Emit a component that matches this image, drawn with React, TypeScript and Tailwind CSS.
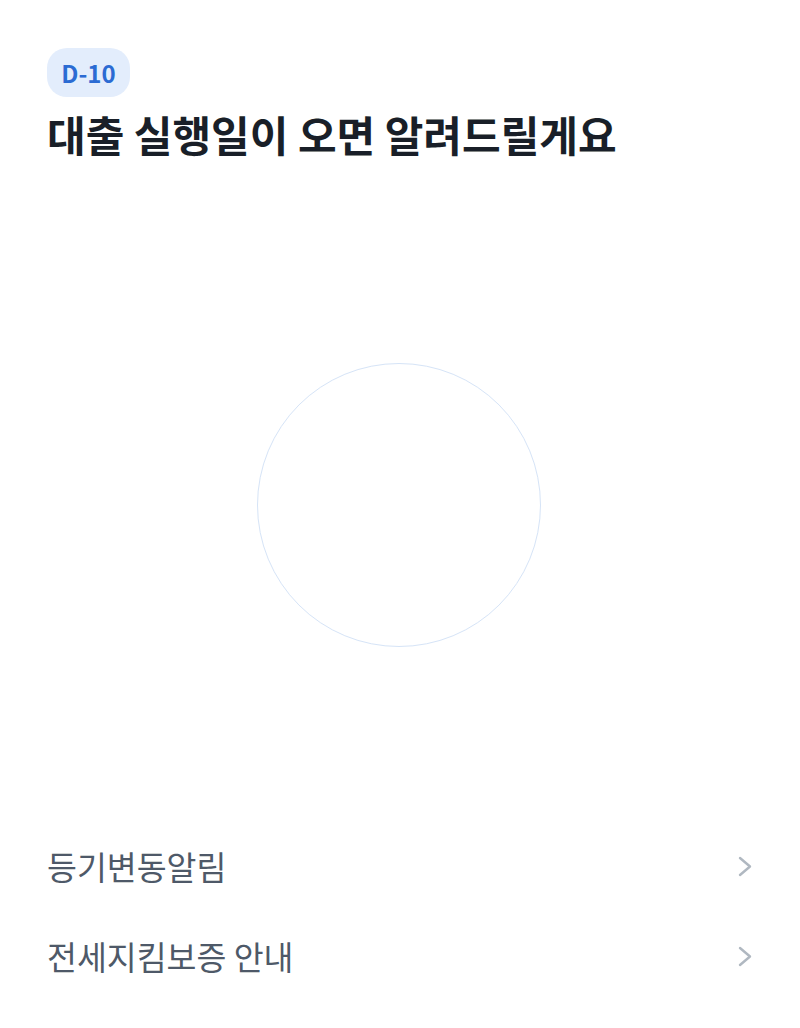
export default function App() {
  const items = ["등기변동알림", "전세지킴보증 안내"];
  return (
    <div
      className="w-full min-h-[1028px] bg-white flex flex-col"
      style={{ fontFamily: '"Noto Sans CJK KR", "Noto Sans", sans-serif' }}
    >
      <div className="px-[47px]">
        <div className="mt-[48px] h-[49px] w-[83px] rounded-[20px] bg-[#e3edfc] flex items-center justify-center text-[24px] font-semibold text-[#2b6bd3] leading-none">
          D-10
        </div>
        <h1 className="mt-[10px] text-[42px] font-bold leading-[54px] text-[#191f28] whitespace-nowrap">
          대출 실행일이 오면 알려드릴게요
        </h1>
      </div>
      <div className="mt-[202px] flex justify-center">
        <div className="w-[284px] h-[284px] rounded-full border-[1.5px] border-[#d6e4f7] ml-[-2px]" />
      </div>
      <div className="mt-[174px] flex flex-col">
        {items.map((t) => (
          <div key={t} className="h-[90px] flex items-center justify-between pl-[47px] pr-[48px]">
            <span className="text-[32.5px] leading-[42px] text-[#4e5968]">{t}</span>
            <svg width="14" height="21" viewBox="0 0 14 21" fill="none">
              <path d="M2 2 L12 10.5 L2 19" stroke="#b0b8c1" strokeWidth="2.4" strokeLinecap="round" strokeLinejoin="round" />
            </svg>
          </div>
        ))}
      </div>
    </div>
  );
}
